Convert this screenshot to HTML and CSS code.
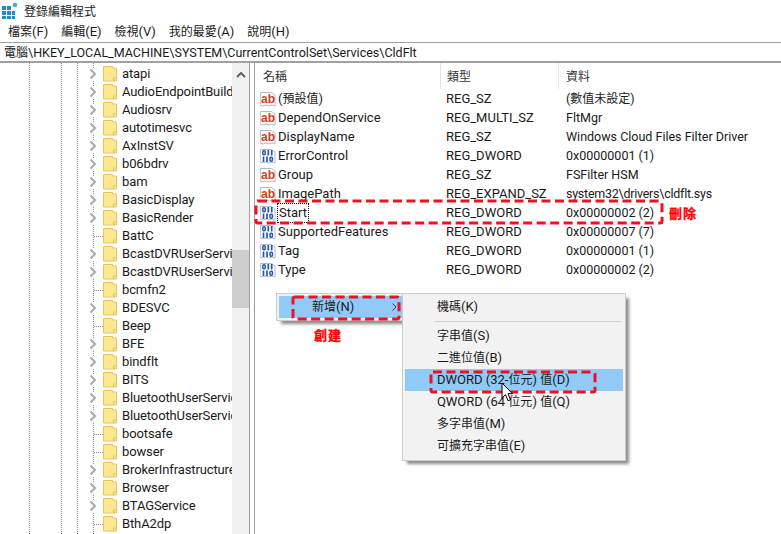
FILE: index.html
```html
<!DOCTYPE html>
<html lang="zh-Hant">
<head>
<meta charset="utf-8">
<title>登錄編輯程式</title>
<link rel="stylesheet" href="styles.css">
</head>
<body>
<svg class="defs" width="0" height="0" aria-hidden="true">
  <defs>
    <symbol id="folder" viewBox="0 0 14 16">
      <path d="M.5.5h9v1.500h4v13H.5z" fill="#fde88f" stroke="#e8c45c"/>
      <path d="M10.500 15v-3h3" fill="none" stroke="#e8c45c"/>
    </symbol>
    <symbol id="chev" viewBox="0 0 8 12">
      <path d="M1.500 1.500 6 6l-4.500 4.500" fill="none" stroke="#a8a8a8" stroke-width="2"/>
    </symbol>
    <symbol id="ab" viewBox="0 0 16 16">
      <path d="M.5 1.500h11l3.500 2.500v11l-3-1-3 1-3-1-3 1-3-1z" fill="#fff" stroke="#b4bac2"/>
      <text x="1" y="11.500" class="ab-text">ab</text>
    </symbol>
    <symbol id="bin" viewBox="0 0 16 16">
      <path d="M.5 1.500h11l3.500 2.500v11l-3-1-3 1-3-1-3 1-3-1z" fill="#fff" stroke="#b4bac2"/>
      <rect x="2.800" y="2.800" width="2.400" height="3.900" rx="1" fill="none" stroke="#2456b5" stroke-width="1.500"/>
      <path d="M8.300 2v5.500M11.700 2v5.500M3.500 8.500V14M7 8.500V14" fill="none" stroke="#2456b5" stroke-width="1.700"/>
      <rect x="10" y="9.300" width="2.400" height="3.900" rx="1" fill="none" stroke="#2456b5" stroke-width="1.500"/>
    </symbol>
  </defs>
</svg>

<div class="window">
  <header class="titlebar">
    <svg class="appicon" width="16" height="16" viewBox="0 0 16 16">
      <path d="M0 3h4v4H0zM5 3h4v4H5zM0 8h4v4H0zM5 8h4v4H5zM10 8h3v4h-3zM0 13h4v3H0zM5 13h4v3H5zM10 13h3v3h-3z" fill="#1c8fc9"/>
      <path d="M11 0h4v4h-4z" fill="#46a9dc" transform="rotate(12 13 2)"/>
    </svg>
    <span class="titletext">登錄編輯程式</span>
  </header>
  <nav class="menubar">
    <span><i class="zh">檔案</i>(F)</span><span><i class="zh">編輯</i>(E)</span><span><i class="zh">檢視</i>(V)</span><span><i class="zh">我的最愛</i>(A)</span><span><i class="zh">說明</i>(H)</span>
  </nav>
  <div class="address"><i class="zh">電腦</i>\HKEY_LOCAL_MACHINE\SYSTEM\CurrentControlSet\Services\CldFlt</div>
  <main class="panes">
    <section class="tree">
      <div class="treelist">
        <div class="node"><svg class="chev"><use href="#chev"/></svg><svg class="folder"><use href="#folder"/></svg><span class="nodename">atapi</span></div>
        <div class="node"><svg class="chev"><use href="#chev"/></svg><svg class="folder"><use href="#folder"/></svg><span class="nodename">AudioEndpointBuilder</span></div>
        <div class="node"><svg class="chev"><use href="#chev"/></svg><svg class="folder"><use href="#folder"/></svg><span class="nodename">Audiosrv</span></div>
        <div class="node"><svg class="chev"><use href="#chev"/></svg><svg class="folder"><use href="#folder"/></svg><span class="nodename">autotimesvc</span></div>
        <div class="node"><svg class="chev"><use href="#chev"/></svg><svg class="folder"><use href="#folder"/></svg><span class="nodename">AxInstSV</span></div>
        <div class="node"><svg class="chev"><use href="#chev"/></svg><svg class="folder"><use href="#folder"/></svg><span class="nodename">b06bdrv</span></div>
        <div class="node"><svg class="chev"><use href="#chev"/></svg><svg class="folder"><use href="#folder"/></svg><span class="nodename">bam</span></div>
        <div class="node"><svg class="chev"><use href="#chev"/></svg><svg class="folder"><use href="#folder"/></svg><span class="nodename">BasicDisplay</span></div>
        <div class="node"><svg class="chev"><use href="#chev"/></svg><svg class="folder"><use href="#folder"/></svg><span class="nodename">BasicRender</span></div>
        <div class="node"><i class="leaf"></i><svg class="folder"><use href="#folder"/></svg><span class="nodename">BattC</span></div>
        <div class="node"><svg class="chev"><use href="#chev"/></svg><svg class="folder"><use href="#folder"/></svg><span class="nodename">BcastDVRUserService</span></div>
        <div class="node"><svg class="chev"><use href="#chev"/></svg><svg class="folder"><use href="#folder"/></svg><span class="nodename">BcastDVRUserService</span></div>
        <div class="node"><i class="leaf"></i><svg class="folder"><use href="#folder"/></svg><span class="nodename">bcmfn2</span></div>
        <div class="node"><svg class="chev"><use href="#chev"/></svg><svg class="folder"><use href="#folder"/></svg><span class="nodename">BDESVC</span></div>
        <div class="node"><i class="leaf"></i><svg class="folder"><use href="#folder"/></svg><span class="nodename">Beep</span></div>
        <div class="node"><svg class="chev"><use href="#chev"/></svg><svg class="folder"><use href="#folder"/></svg><span class="nodename">BFE</span></div>
        <div class="node"><svg class="chev"><use href="#chev"/></svg><svg class="folder"><use href="#folder"/></svg><span class="nodename">bindflt</span></div>
        <div class="node"><svg class="chev"><use href="#chev"/></svg><svg class="folder"><use href="#folder"/></svg><span class="nodename">BITS</span></div>
        <div class="node"><svg class="chev"><use href="#chev"/></svg><svg class="folder"><use href="#folder"/></svg><span class="nodename">BluetoothUserService</span></div>
        <div class="node"><svg class="chev"><use href="#chev"/></svg><svg class="folder"><use href="#folder"/></svg><span class="nodename">BluetoothUserService</span></div>
        <div class="node"><i class="leaf"></i><svg class="folder"><use href="#folder"/></svg><span class="nodename">bootsafe</span></div>
        <div class="node"><i class="leaf"></i><svg class="folder"><use href="#folder"/></svg><span class="nodename">bowser</span></div>
        <div class="node"><svg class="chev"><use href="#chev"/></svg><svg class="folder"><use href="#folder"/></svg><span class="nodename">BrokerInfrastructure</span></div>
        <div class="node"><svg class="chev"><use href="#chev"/></svg><svg class="folder"><use href="#folder"/></svg><span class="nodename">Browser</span></div>
        <div class="node"><svg class="chev"><use href="#chev"/></svg><svg class="folder"><use href="#folder"/></svg><span class="nodename">BTAGService</span></div>
        <div class="node"><i class="leaf"></i><svg class="folder"><use href="#folder"/></svg><span class="nodename">BthA2dp</span></div>
      </div>
      <div class="vscroll">
        <svg class="up" width="10" height="6" viewBox="0 0 10 6"><path d="M1 5l4-4 4 4" fill="none" stroke="#606060" stroke-width="2"/></svg>
        <div class="thumb"></div>
      </div>
    </section>
    <section class="list">
      <div class="row head"><span class="zh">名稱</span><span class="zh">類型</span><span class="zh">資料</span></div>
      <div class="row"><span class="name"><svg class="vicon"><use href="#ab"/></svg><span>(<i class="zh">預設值</i>)</span></span><span>REG_SZ</span><span>(<i class="zh">數值未設定</i>)</span></div>
      <div class="row"><span class="name"><svg class="vicon"><use href="#ab"/></svg>DependOnService</span><span>REG_MULTI_SZ</span><span>FltMgr</span></div>
      <div class="row"><span class="name"><svg class="vicon"><use href="#ab"/></svg>DisplayName</span><span>REG_SZ</span><span>Windows Cloud Files Filter Driver</span></div>
      <div class="row"><span class="name"><svg class="vicon"><use href="#bin"/></svg>ErrorControl</span><span>REG_DWORD</span><span>0x00000001 (1)</span></div>
      <div class="row"><span class="name"><svg class="vicon"><use href="#ab"/></svg>Group</span><span>REG_SZ</span><span>FSFilter HSM</span></div>
      <div class="row"><span class="name"><svg class="vicon"><use href="#ab"/></svg>ImagePath</span><span>REG_EXPAND_SZ</span><span class="path">system32\drivers\cldflt.sys</span></div>
      <div class="row"><span class="name"><svg class="vicon"><use href="#bin"/></svg><b class="focus">Start</b></span><span>REG_DWORD</span><span>0x00000002 (2)</span></div>
      <div class="row"><span class="name"><svg class="vicon"><use href="#bin"/></svg>SupportedFeatures</span><span>REG_DWORD</span><span>0x00000007 (7)</span></div>
      <div class="row"><span class="name"><svg class="vicon"><use href="#bin"/></svg>Tag</span><span>REG_DWORD</span><span>0x00000001 (1)</span></div>
      <div class="row"><span class="name"><svg class="vicon"><use href="#bin"/></svg>Type</span><span>REG_DWORD</span><span>0x00000002 (2)</span></div>
    </section>
  </main>

  <div class="menu menu-new"><div class="item hot"><i class="zh">新增</i>(N)<svg class="arrow" width="5" height="8" viewBox="0 0 5 8"><path d="M.5.5 4 4 .5 7.500" fill="none" stroke="#444"/></svg></div></div>
  <div class="menu menu-sub">
    <div class="item"><i class="zh">機碼</i>(K)</div>
    <div class="sep"></div>
    <div class="item"><i class="zh">字串值</i>(S)</div>
    <div class="item"><i class="zh">二進位值</i>(B)</div>
    <div class="item hot">DWORD (32-<i class="zh">位元</i>) <i class="zh">值</i>(D)</div>
    <div class="item">QWORD (64 <i class="zh">位元</i>) <i class="zh">值</i>(Q)</div>
    <div class="item"><i class="zh">多字串值</i>(M)</div>
    <div class="item"><i class="zh">可擴充字串值</i>(E)</div>
  </div>

  <svg class="mark mark-start" width="410" height="26" viewBox="0 0 410 26"><rect class="dash" x="2" y="2" width="406" height="22" rx="2"/></svg>
  <svg class="mark mark-new" width="110" height="26" viewBox="0 0 110 26"><rect class="dash" x="2" y="2" width="106" height="22" rx="2"/></svg>
  <svg class="mark mark-dword" width="168" height="24" viewBox="0 0 168 24"><rect class="dash" x="2" y="2" width="164" height="20" rx="2"/></svg>
  <div class="note note-del">刪除</div>
  <div class="note note-create">創建</div>
  <svg class="cursor" width="13" height="20" viewBox="0 0 13 20"><path d="M1 1v15l3.500-3.300 2.500 6 2.500-1-2.500-6h4.500z" fill="#fff" stroke="#000"/></svg>
</div>
</body>
</html>
```

FILE: styles.css
```css
* { box-sizing: border-box; }
html, body { margin: 0; padding: 0; }
body {
  width: 781px;
  height: 534px;
  overflow: hidden;
  background: #fff;
  color: #1a1a1a;
  font: 13px/18px Roboto, "Noto Sans CJK TC", sans-serif;
}
.zh { font-style: normal; font-size: 12px; font-family: "Noto Sans CJK TC", sans-serif; }
.defs { position: absolute; }
.ab-text { font: 700 12px "Liberation Sans", sans-serif; fill: #d0401c; }
.window { position: relative; width: 781px; height: 534px; display: flex; flex-direction: column; }
.titlebar { height: 22px; display: flex; align-items: center; padding-left: 2px; gap: 6px; }
.titletext { font-size: 12px; font-family: "Noto Sans CJK TC", sans-serif; }
.menubar { height: 20px; display: flex; gap: 13px; padding: 0 0 2px 8px; align-items: center; }
.address {
  height: 21px;
  border-top: 1px solid #a0a0a0;
  border-bottom: 2px solid #a0a0a0;
  padding-left: 4px;
  font-size: 12.5px;
  line-height: 18px;
  white-space: nowrap;
}
.panes { flex: 1; min-height: 0; display: flex; gap: 4px; }
.tree { width: 250px; display: flex; border-right: 1px solid #a0a0a0; overflow: hidden; }
.treelist {
  width: 232px;
  padding-top: 2px;
  overflow: hidden;
  background:
    repeating-linear-gradient(#8a8a8a 0 1px, transparent 1px 2px) 29px 0 / 1px 100% no-repeat,
    repeating-linear-gradient(#8a8a8a 0 1px, transparent 1px 2px) 61px 0 / 1px 100% no-repeat,
    repeating-linear-gradient(#8a8a8a 0 1px, transparent 1px 2px) 77px 0 / 1px 100% no-repeat,
    repeating-linear-gradient(#8a8a8a 0 1px, transparent 1px 2px) 93px 0 / 1px 100% no-repeat;
}
.node { height: 18px; display: flex; align-items: center; padding-left: 89px; white-space: nowrap; }
.chev { width: 8px; height: 12px; margin-right: 6px; background: #fff; flex: none; }
.leaf {
  width: 14px;
  height: 1px;
  margin-left: 5px;
  margin-right: -5px;
  flex: none;
  background: repeating-linear-gradient(90deg, #8a8a8a 0 1px, transparent 1px 2px);
}
.folder { width: 14px; height: 16px; flex: none; background: #fff; }
.nodename { margin-left: 5px; letter-spacing: -.12px; }
.vscroll { width: 17px; background: #f0f0f0; display: flex; flex-direction: column; align-items: center; padding-top: 9px; }
.thumb { width: 100%; height: 58px; background: #cdcdcd; margin-top: 172px; flex: none; }
.list { flex: 1; min-width: 0; border-left: 1px solid #a0a0a0; }
.row { height: 19px; display: grid; grid-template-columns: 191px 120px 1fr; align-items: center; white-space: nowrap; }
.row > span:first-child { padding-left: 5px; }
.row > span:last-child { font-size: 12.5px; }
.row > .path { letter-spacing: -.25px; }
.row > .name { display: flex; align-items: center; gap: 2px; }
.head { height: 26px; padding: 0 0 1px 3px; grid-template-columns: 189px 119px 1fr; color: #333; background:
  linear-gradient(#e5e5e5, #e5e5e5) 185px 0 / 1px 100% no-repeat,
  linear-gradient(#e5e5e5, #e5e5e5) 303px 0 / 1px 100% no-repeat; }
.row.head > .zh { font-size: 12px; }
.vicon { width: 16px; height: 16px; flex: none; }
.focus { font-weight: 400; outline: 1px dotted #000; padding: 0 1px; line-height: 18px; }
.menu {
  position: absolute;
  background: #f2f2f2;
  border: 1px solid #cccccc;
  box-shadow: 4px 4px 3px -1px rgba(0, 0, 0, .45);
}
.menu-new { left: 276px; top: 293px; width: 127px; height: 28px; padding: 2px 0 0 2px; border-right: 0; }
.menu-sub { left: 402px; top: 293px; width: 224px; height: 168px; padding: 2px; }
.item { height: 22px; line-height: 20px; padding-left: 32px; white-space: nowrap; position: relative; }
.hot { background: #91c9f7; }
.menu-new .item { padding-left: 33px; }
.arrow { position: absolute; right: 6px; top: 7px; }
.sep { height: 1px; background: #d0d0d0; margin: 3px 2px 3px 30px; }
.mark { position: absolute; }
.dash { fill: none; stroke: #f01020; stroke-width: 3; stroke-dasharray: 9 4.500; }
.mark-start { left: 254px; top: 199px; }
.mark-new { left: 291px; top: 295px; }
.mark-dword { left: 429px; top: 370px; }
.note { position: absolute; color: #f00; font: 700 13px/18px "Noto Sans CJK TC", sans-serif; letter-spacing: 1px; -webkit-text-stroke: .3px #f00; }
.note-del { left: 669px; top: 204px; }
.note-create { left: 314px; top: 326px; }
.cursor { position: absolute; left: 501px; top: 382px; }
```
